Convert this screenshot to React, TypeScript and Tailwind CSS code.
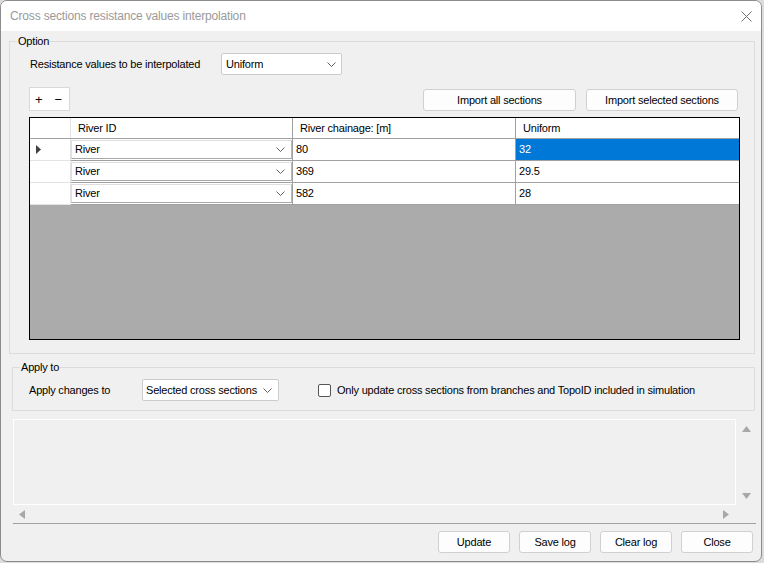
import React from "react";

const Chevron = ({ className = "" }: { className?: string }) => (
  <svg width="9" height="5" viewBox="0 0 9 5" className={className}>
    <polyline points="0.5,0.5 4.5,4.5 8.5,0.5" fill="none" stroke="#606060" strokeWidth="1" />
  </svg>
);

const Btn = ({ label, w }: { label: string; w: string }) => (
  <div
    className={`${w} h-[22px] flex items-center justify-center rounded-[3px] border border-[#d0d0d0] bg-[#fdfdfd] text-[11px] tracking-[-0.2px] text-black`}
  >
    {label}
  </div>
);

const rows = [
  { ch: "80", v: "32", sel: true },
  { ch: "369", v: "29.5", sel: false },
  { ch: "582", v: "28", sel: false },
];

export default function App() {
  return (
    <div className="w-[764px] h-[563px] bg-[#dcdcdc] font-['Liberation_Sans',Arial,sans-serif] overflow-hidden">
      <div className="w-[762px] h-[562px] bg-[#f0f0f0] border border-[#8c8c8c] rounded-[7px] overflow-hidden flex flex-col">
        {/* Title bar */}
        <div className="h-[30px] bg-white flex items-center justify-between pl-[9px] pr-[9px] shrink-0">
          <span className="text-[12px] tracking-[-0.17px] text-[#9a9a9a]">Cross sections resistance values interpolation</span>
          <svg width="11" height="11" viewBox="0 0 11 11">
            <path d="M0.5 0.5 L10.5 10.5 M10.5 0.5 L0.5 10.5" stroke="#707070" strokeWidth="1" />
          </svg>
        </div>

        {/* Option group */}
        <div className="relative ml-[8px] mt-[10px] w-[746px] h-[313px] border border-[#dcdcdc] shrink-0 text-[11px] tracking-[-0.2px] text-black">
          <span className="absolute -top-[7px] left-[7px] px-[1px] bg-[#f0f0f0] leading-[12px]">
            Option
          </span>
          <div className="flex items-center mt-[11px] ml-[20px]">
            <span className="w-[191px]">Resistance values to be interpolated</span>
            <div className="w-[121px] h-[22px] bg-white border border-[#cccccc] rounded-[2px] flex items-center justify-between pl-[4px] pr-[5px]">
              <span>Uniform</span>
              <Chevron />
            </div>
          </div>
          <div className="flex items-end mt-[12px] ml-[19px] w-[709px]">
            <div className="w-[41px] h-[24px] bg-white border border-[#d9d9d9] flex items-center pl-[5px] gap-[12px] text-[13px] leading-none">
              <span>+</span>
              <span>−</span>
            </div>
            <div className="flex-1" />
            <div className="flex gap-[10px]">
              <Btn label="Import all sections" w="w-[153px]" />
              <Btn label="Import selected sections" w="w-[152px]" />
            </div>
          </div>

          {/* Grid */}
          <div className="mt-[6px] ml-[19px] w-[711px] h-[223px] border border-black bg-[#ababab] flex flex-col">
            <div className="flex h-[21px] bg-white border-b border-[#a0a0a0]">
              <div className="w-[41px] border-r border-[#e3e3e3]" />
              <div className="w-[222px] border-r border-[#a0a0a0] flex items-center pl-[7px]">River ID</div>
              <div className="w-[223px] border-r border-[#a0a0a0] flex items-center pl-[7px]">River chainage: [m]</div>
              <div className="flex-1 flex items-center pl-[7px]">Uniform</div>
            </div>
            {rows.map((r, i) => (
              <div key={i} className="flex h-[22px] bg-white">
                <div className="w-[41px] border-r border-b border-[#e3e3e3] flex items-center pl-[6px]">
                  {r.sel && (
                    <svg width="5" height="9" viewBox="0 0 5 9">
                      <polygon points="0,0 5,4.5 0,9" fill="#404040" />
                    </svg>
                  )}
                </div>
                <div className="w-[222px] border-r border-b border-[#a0a0a0] flex">
                  <div className="flex-1 my-[1px] border border-[#dedede] border-b-[#a8a8a8] border-r-[#b8b8b8] bg-white flex items-center justify-between pl-[3px] pr-[6px]">
                    <span>River</span>
                    <Chevron />
                  </div>
                </div>
                <div className="w-[223px] border-r border-b border-[#a0a0a0] flex items-center pl-[3px]">{r.ch}</div>
                <div
                  className={`flex-1 border-b border-[#a0a0a0] flex items-center pl-[3px] ${
                    r.sel ? "bg-[#0078d7] text-white" : ""
                  }`}
                >
                  {r.v}
                </div>
              </div>
            ))}
          </div>
        </div>

        {/* Apply to group */}
        <div className="relative ml-[11px] mt-[13px] w-[743px] h-[44px] border border-[#dcdcdc] shrink-0 text-[11px] tracking-[-0.2px] text-black">
          <span className="absolute -top-[7px] left-[7px] px-[1px] bg-[#f0f0f0] leading-[12px]">
            Apply to
          </span>
          <div className="flex items-center mt-[11px] ml-[16px]">
            <span className="w-[113px]">Apply changes to</span>
            <div className="w-[137px] h-[22px] bg-white border border-[#cccccc] rounded-[2px] flex items-center justify-between pl-[3px] pr-[6px]">
              <span>Selected cross sections</span>
              <Chevron />
            </div>
            <div className="ml-[39px] w-[13px] h-[13px] border border-[#555] rounded-[2px] bg-white" />
            <span className="ml-[6px]">
              Only update cross sections from branches and TopoID included in simulation
            </span>
          </div>
        </div>

        {/* Log area */}
        <div className="ml-[12px] mt-[8px] w-[743px] h-[105px] border-b border-[#a0a0a0] flex flex-col shrink-0">
          <div className="flex flex-1">
            <div className="flex-1 border border-white" />
            <div className="w-[20px] flex flex-col items-center justify-between pt-[7px] pb-[6px]">
              <svg width="9" height="6" viewBox="0 0 9 6">
                <polygon points="0,6 4.5,0 9,6" fill="#a8a8a8" />
              </svg>
              <svg width="9" height="6" viewBox="0 0 9 6">
                <polygon points="0,0 4.5,6 9,0" fill="#a8a8a8" />
              </svg>
            </div>
          </div>
          <div className="h-[18px] flex items-center justify-between pl-[6px] pr-[27px]">
            <svg width="6" height="9" viewBox="0 0 6 9">
              <polygon points="6,0 0,4.5 6,9" fill="#a8a8a8" />
            </svg>
            <svg width="6" height="9" viewBox="0 0 6 9">
              <polygon points="0,0 6,4.5 0,9" fill="#a8a8a8" />
            </svg>
          </div>
        </div>

        {/* Bottom buttons */}
        <div className="flex justify-end gap-[9px] mt-[7px] mr-[8px]">
          <Btn label="Update" w="w-[72px]" />
          <Btn label="Save log" w="w-[72px]" />
          <Btn label="Clear log" w="w-[72px]" />
          <Btn label="Close" w="w-[72px]" />
        </div>
      </div>
    </div>
  );
}
